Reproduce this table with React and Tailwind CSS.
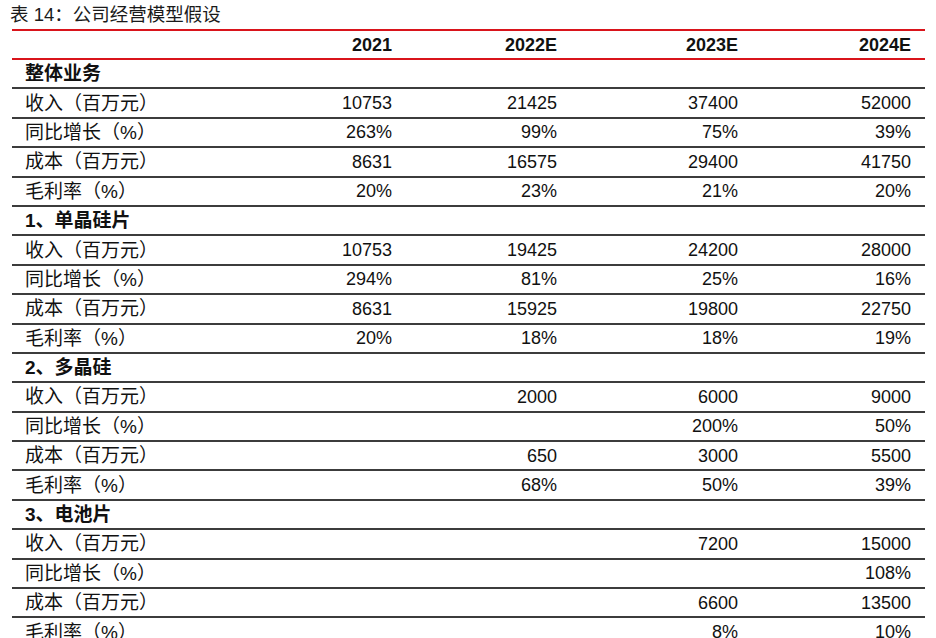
import React from "react";

const groups = [
  {
    title: "整体业务",
    rows: [
      ["收入（百万元）", "10753", "21425", "37400", "52000"],
      ["同比增长（%）", "263%", "99%", "75%", "39%"],
      ["成本（百万元）", "8631", "16575", "29400", "41750"],
      ["毛利率（%）", "20%", "23%", "21%", "20%"],
    ],
  },
  {
    title: "1、单晶硅片",
    rows: [
      ["收入（百万元）", "10753", "19425", "24200", "28000"],
      ["同比增长（%）", "294%", "81%", "25%", "16%"],
      ["成本（百万元）", "8631", "15925", "19800", "22750"],
      ["毛利率（%）", "20%", "18%", "18%", "19%"],
    ],
  },
  {
    title: "2、多晶硅",
    rows: [
      ["收入（百万元）", "", "2000", "6000", "9000"],
      ["同比增长（%）", "", "", "200%", "50%"],
      ["成本（百万元）", "", "650", "3000", "5500"],
      ["毛利率（%）", "", "68%", "50%", "39%"],
    ],
  },
  {
    title: "3、电池片",
    rows: [
      ["收入（百万元）", "", "", "7200", "15000"],
      ["同比增长（%）", "", "", "", "108%"],
      ["成本（百万元）", "", "", "6600", "13500"],
      ["毛利率（%）", "", "", "8%", "10%"],
    ],
  },
];

const grid =
  "grid grid-cols-[228px_166px_165px_181px_173px] items-center";

function Row({ cells }) {
  return (
    <div
      className={`${grid} h-[29.4px] box-border border-b-2 border-[#3c3c3c]`}
    >
      <div className="pl-[13px] text-[19px] leading-none">{cells[0]}</div>
      {cells.slice(1).map((c, i) => (
        <div key={i} className="pr-[14px] text-right text-[18px] leading-none">
          {c}
        </div>
      ))}
    </div>
  );
}

export default function App() {
  return (
    <div
      className="w-[936px] h-[638px] overflow-hidden bg-white text-[#111]"
      style={{
        fontFamily:
          '"Liberation Sans", Arial, "Noto Sans CJK SC", sans-serif',
      }}
    >
      <div className="h-[29px] flex items-center pl-[10px] text-[18.5px] text-[#1a1a1a]">
        表 14：公司经营模型假设
      </div>
      <div className="ml-[12px] w-[913px]">
        <div
          className={`${grid} h-[31px] box-border border-y-2 border-[#d9141b] font-bold`}
        >
          <div></div>
          {["2021", "2022E", "2023E", "2024E"].map((y) => (
            <div key={y} className="pr-[14px] text-right text-[18px] leading-none">
              {y}
            </div>
          ))}
        </div>
        {groups.map((g) => (
          <React.Fragment key={g.title}>
            <div className="h-[29.4px] box-border border-b-2 border-[#3c3c3c] flex items-center pl-[13px] text-[19px] font-bold leading-none">
              {g.title}
            </div>
            {g.rows.map((r, i) => (
              <Row key={i} cells={r} />
            ))}
          </React.Fragment>
        ))}
      </div>
    </div>
  );
}
